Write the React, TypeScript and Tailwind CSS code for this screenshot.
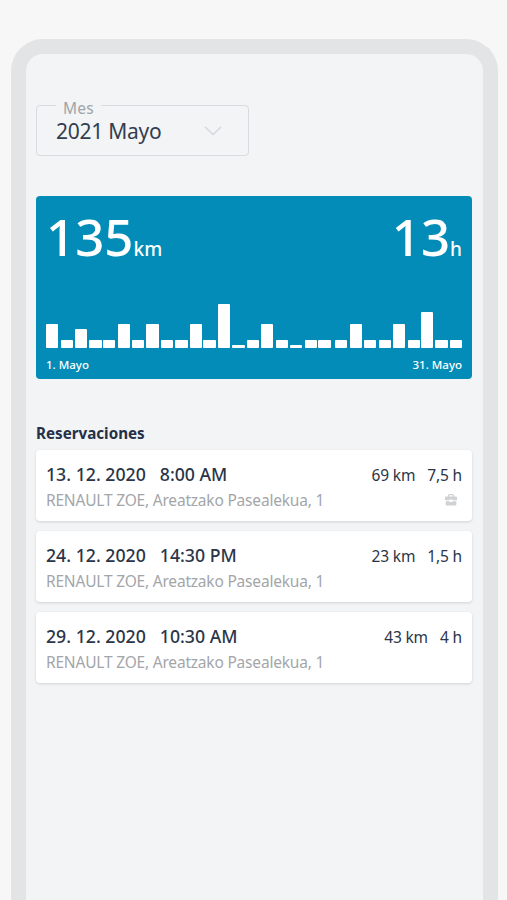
type Booking = {
  date: string;
  time: string;
  place: string;
  distance: string;
  duration: string;
  business?: boolean;
};

const bookings: Booking[] = [
  { date: "13. 12. 2020", time: "8:00 AM", place: "RENAULT ZOE, Areatzako Pasealekua, 1", distance: "69 km", duration: "7,5 h", business: true },
  { date: "24. 12. 2020", time: "14:30 PM", place: "RENAULT ZOE, Areatzako Pasealekua, 1", distance: "23 km", duration: "1,5 h" },
  { date: "29. 12. 2020", time: "10:30 AM", place: "RENAULT ZOE, Areatzako Pasealekua, 1", distance: "43 km", duration: "4 h" },
];

// [bar height, gap before the bar]
const bars: number[][] = [
  [24.5, 0], [8, 2.3], [19.5, 2.2], [8, 2.2], [8, 1.4], [24.5, 2.2], [8, 2.3], [24.5, 2.2], [8, 2.3], [8, 2.2],
  [24.5, 2.3], [8, 1.2], [44.5, 2.1], [3.5, 2.3], [8, 2.2], [24.5, 2.2], [8, 2.3], [3.5, 2.2], [8, 2.2], [8, 1.6],
  [8, 4.5], [24.5, 2.3], [8, 2.2], [8, 2.2], [24.5, 2.3], [8, 2.2], [36, 1.2], [8, 2.0], [8, 2.3],
];

function MonthSelect() {
  return (
    <button className="relative flex h-[51px] w-[213px] items-center justify-between rounded-[4px] border-[1.5px] border-[#d9dcde] pr-[26px] pl-[19px] text-left">
      <span className="absolute -top-[9px] left-[19px] bg-[#f2f4f6] px-[7px] text-[15.5px] leading-[22px] tracking-[0.2px] text-[#a0a4a8]">
        Mes
      </span>
      <span className="pt-[1px] text-[21px] leading-[28px] tracking-[-0.25px] text-[#333d50]">2021 Mayo</span>
      <svg width="18" height="10" viewBox="0 0 18 10" fill="none" stroke="#d6d9db" strokeWidth="1.6">
        <path d="M1 1l8 7.5L17 1" />
      </svg>
    </button>
  );
}

function Summary() {
  return (
    <section className="mt-10 flex h-[182.5px] flex-col rounded-[4px] bg-[#038cb7] px-[10px] text-white">
      <div className="flex h-[66px] items-end justify-between leading-none">
        <p className="flex items-baseline">
          <span className="text-[51px] font-[550]">135</span>
          <span className="text-[19px] font-medium">km</span>
        </p>
        <p className="flex items-baseline">
          <span className="text-[51px] font-[550]">13</span>
          <span className="text-[19px] font-medium">h</span>
        </p>
      </div>
      <div className="flex h-[86px] shrink-0 items-end">
        {bars.map(([height, gap], i) => (
          <div key={i} className="w-[12.25px] shrink-0 rounded-[1px] bg-white" style={{ height, marginLeft: gap }} />
        ))}
      </div>
      <div className="mt-[9px] flex justify-between text-[11.5px] leading-4 font-medium">
        <span>1. Mayo</span>
        <span>31. Mayo</span>
      </div>
    </section>
  );
}

function BriefcaseIcon() {
  return (
    <svg width="12" height="12" viewBox="0 0 12 12" fill="#d0d1d2">
      <path fillRule="evenodd" d="M4 0h4l1 1v1.5h2.2l.8.8v3H7.5V5.5h-3v.8H0v-3l.8-.8H3V1zm.2 1.2v1.3h3.6V1.2z" />
      <path d="M.7 7.2h3.8V8h3v-.8h3.8v3.6l-.7.7H1.4l-.7-.7z" />
    </svg>
  );
}

function BookingCard({ booking }: { booking: Booking }) {
  return (
    <li className="h-[71px] rounded-[4px] bg-white px-[10px] pt-[12px] shadow-[0_1px_3px_rgba(0,0,0,0.14)]">
      <div className="flex items-center justify-between text-[#2b3548]">
        <p className="flex gap-[14px] text-[17.7px] leading-[25px] font-medium">
          <span>{booking.date}</span>
          <span>{booking.time}</span>
        </p>
        <p className="flex gap-[12px] pt-[2px] text-[15.5px] leading-[23px] tracking-[-0.15px]">
          <span>{booking.distance}</span>
          <span>{booking.duration}</span>
        </p>
      </div>
      <div className="mt-[2px] flex items-center justify-between pr-[5px]">
        <p className="text-[15.5px] leading-[23px] tracking-[-0.2px] text-[#a3a6a9]">{booking.place}</p>
        {booking.business && <BriefcaseIcon />}
      </div>
    </li>
  );
}

export default function App() {
  return (
    <div className="h-[900px] overflow-hidden bg-[#f7f7f7] pt-[39px] pr-[9.5px] pl-[10.5px] font-['Noto_Sans',sans-serif]">
      <main className="h-[900px] rounded-t-[32px] border-[15.5px] border-b-0 border-[#e2e4e5] bg-[#f2f4f6] pt-[51px] pr-[10.5px] pl-[10.5px]">
        <MonthSelect />
        <Summary />
        <h2 className="mt-[43px] text-[15.2px] leading-[23px] font-bold text-[#263046]">Reservaciones</h2>
        <ul className="mt-[5px] space-y-[10px]">
          {bookings.map((booking) => (
            <BookingCard key={booking.date} booking={booking} />
          ))}
        </ul>
      </main>
    </div>
  );
}
